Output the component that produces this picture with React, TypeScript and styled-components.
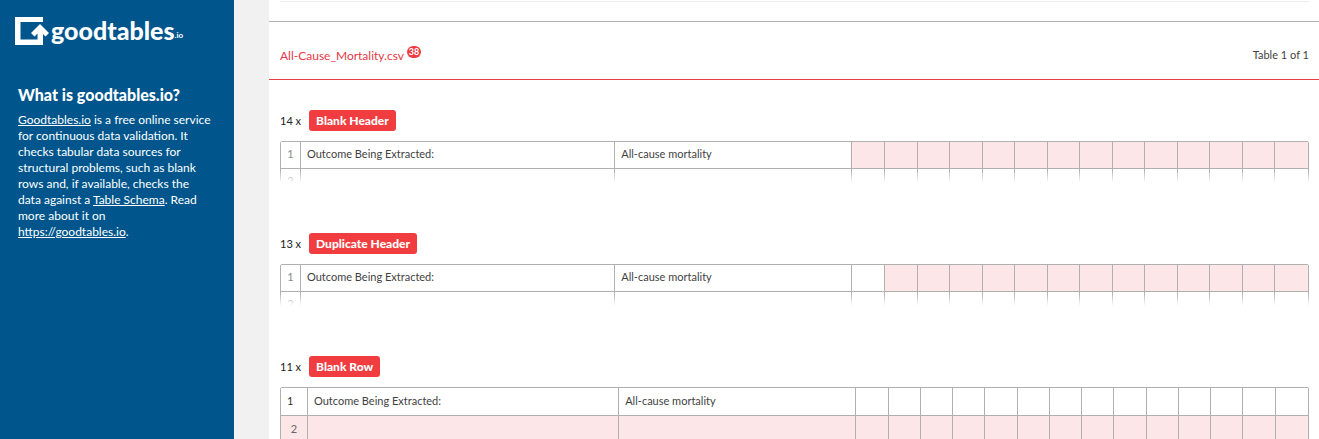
import React from "react";
import styled, { createGlobalStyle } from "styled-components";

const GlobalStyle = createGlobalStyle`
  *, *::before, *::after { box-sizing: border-box; }
  body {
    margin: 0;
    background: #f1f1f1;
    color: #3f3f3f;
    font-family: Lato, "Open Sans", sans-serif;
    font-size: 11px;
    line-height: 16px;
  }
`;

const Page = styled.div`
  display: flex;
  height: 100vh;
  overflow: hidden;
`;

const Sidebar = styled.aside`
  flex: 0 0 234px;
  padding: 16px 20px 16px 18px;
  background: #00568c;
  color: #fff;
`;

const Brand = styled.a`
  display: flex;
  align-items: flex-start;
  margin-left: -3px;
  color: #fff;
  text-decoration: none;
`;

const BrandMark = styled.svg`
  width: 34px;
  height: 29px;
  margin-right: 2px;
`;

const BrandName = styled.span`
  font-size: 25px;
  font-weight: 900;
  line-height: 28px;
`;

const BrandSuffix = styled.span`
  font-size: 8px;
  font-weight: 700;
  line-height: 38px;
`;

const SidebarTitle = styled.h2`
  margin: 31px 0 7px;
  font-size: 16px;
  font-weight: 900;
  line-height: 20px;
`;

const Intro = styled.p`
  margin: 0;
  font-size: 12px;
  line-height: 16px;

  a { color: inherit; }
`;

const Main = styled.main`
  flex: 1;
  min-width: 0;
  margin-left: 35px;
  background: #fff;
`;

const Divider = styled.hr`
  height: 1px;
  margin: 1px 10px 19px 11px;
  border: 0;
  background: #eee;
`;

const FileBar = styled.header`
  display: flex;
  justify-content: space-between;
  padding: 24px 10px 13px 11px;
  border-top: 1px solid #b0b0b0;
  border-bottom: 1px solid #e8404a;
`;

const FileLink = styled.a`
  display: flex;
  align-items: flex-start;
  gap: 3px;
  color: #e63946;
  font-size: 12px;
  line-height: 20px;
  text-decoration: none;
`;

const CountBadge = styled.span`
  min-width: 14px;
  height: 12px;
  border-radius: 6px;
  background: #f13c40;
  color: #fff;
  font-size: 9px;
  font-weight: 700;
  line-height: 12px;
  text-align: center;
`;

const TablePosition = styled.span`
  line-height: 17px;
`;

const Report = styled.section`
  padding: 30px 10px 0 11px;
  margin-bottom: 20px;
`;

const ReportTitle = styled.h3`
  display: flex;
  align-items: center;
  gap: 8px;
  margin: 0 0 10px;
  font-size: 11px;
  font-weight: 400;
  line-height: 21px;
  color: #222;
`;

const ErrorLabel = styled.span`
  padding: 0 7px;
  border-radius: 3px;
  background: #f13c40;
  color: #fff;
  font-size: 12px;
  font-weight: 900;
`;

const TableFrame = styled.div<{ $faded: boolean }>`
  position: relative;
  overflow: hidden;
  height: ${(p) => (p.$faded ? "42px" : "auto")};

  &::after {
    content: "";
    display: ${(p) => (p.$faded ? "block" : "none")};
    position: absolute;
    inset: auto 0 0;
    height: 13px;
    background: linear-gradient(rgba(255, 255, 255, 0), #fff);
  }
`;

const Grid = styled.table`
  width: 100%;
  table-layout: fixed;
  border: 1px solid #b0b0b0;
  border-radius: 2px;
  border-spacing: 0;
  font-size: 11px;
`;

const NumberCol = styled.col<{ $wide: boolean }>`
  width: ${(p) => (p.$wide ? "27px" : "20px")};
`;
const NameCol = styled.col<{ $wide: boolean }>`
  width: ${(p) => (p.$wide ? "30.3%" : "30.6%")};
`;
const ValueCol = styled.col`
  width: 23.1%;
`;

const Cell = styled.td<{ $bad?: boolean; $tall: boolean }>`
  height: ${(p) => (p.$tall ? "28px" : "27px")};
  padding: 0 6px 2px;
  border-right: 1px solid #b0b0b0;
  border-bottom: 1px solid #b0b0b0;
  background: ${(p) => (p.$bad ? "#fce6e8" : "#fff")};
  white-space: nowrap;

  &:last-child { border-right: 0; }
`;

const RowNumber = styled(Cell).attrs({ as: "th", scope: "row" })<{ $muted?: boolean }>`
  padding: 0 0 2px;
  color: ${(p) => (p.$muted ? "#888" : p.$bad ? "#666" : "#333")};
  font-weight: 400;
  text-align: center;
  ${(p) => p.$tall && !p.$bad && "padding-left: 6px; text-align: left;"}
`;

type ReportProps = {
  count: number;
  label: string;
  tall?: boolean;
  isBad: (row: number, column: number) => boolean;
};

const columns = Array.from({ length: 16 }, (_, i) => i);
const firstRow = ["Outcome Being Extracted:", "All-cause mortality"];

function ErrorReport({ count, label, tall = false, isBad }: ReportProps) {
  return (
    <Report>
      <ReportTitle>
        {count} x <ErrorLabel>{label}</ErrorLabel>
      </ReportTitle>
      <TableFrame $faded={!tall}>
        <Grid>
          <colgroup>
            <NumberCol $wide={tall} />
            <NameCol $wide={tall} />
            <ValueCol />
            {columns.slice(2).map((c) => <col key={c} />)}
          </colgroup>
          <tbody>
            {[1, 2].map((row) => (
              <tr key={row}>
                <RowNumber $tall={tall} $muted={!tall} $bad={tall && row === 2}>{row}</RowNumber>
                {columns.map((c) => (
                  <Cell key={c} $tall={tall} $bad={isBad(row, c)}>
                    {row === 1 ? firstRow[c] : null}
                  </Cell>
                ))}
              </tr>
            ))}
          </tbody>
        </Grid>
      </TableFrame>
    </Report>
  );
}

export default function App() {
  return (
    <>
      <GlobalStyle />
      <Page>
        <Sidebar>
          <Brand href="#">
            <BrandMark viewBox="0 0 34 29" aria-hidden="true">
              <path
                d="M0 1H28V6H5.500V23.500H22.500V17.500L19.500 20.500L16 17L25 8L34 17L30.500 20.500L28 18V29H0Z"
                fill="#fff"
              />
            </BrandMark>
            <BrandName>goodtables</BrandName>
            <BrandSuffix>.io</BrandSuffix>
          </Brand>
          <SidebarTitle>What is goodtables.io?</SidebarTitle>
          <Intro>
            <a href="#">Goodtables.io</a> is a free online service for continuous data
            validation. It checks tabular data sources for structural problems, such as blank
            rows and, if available, checks the data against a <a href="#">Table Schema</a>. Read
            more about it on <a href="#">https://goodtables.io</a>.
          </Intro>
        </Sidebar>
        <Main>
          <Divider />
          <FileBar>
            <FileLink href="#">
              All-Cause_Mortality.csv <CountBadge>38</CountBadge>
            </FileLink>
            <TablePosition>Table 1 of 1</TablePosition>
          </FileBar>
          <ErrorReport count={14} label="Blank Header" isBad={(r, c) => r === 1 && c > 1} />
          <ErrorReport count={13} label="Duplicate Header" isBad={(r, c) => r === 1 && c > 2} />
          <ErrorReport count={11} label="Blank Row" tall isBad={(r) => r === 2} />
        </Main>
      </Page>
    </>
  );
}
